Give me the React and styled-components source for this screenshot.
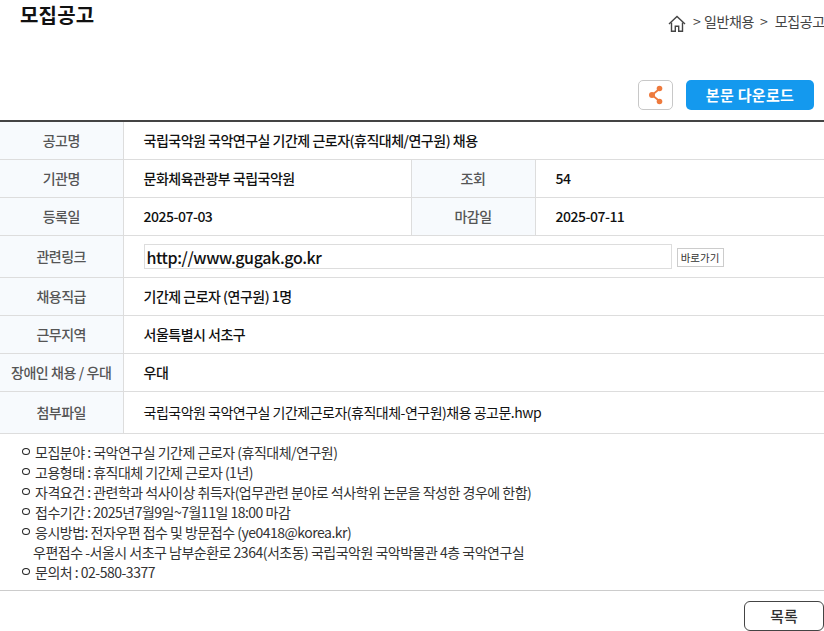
import React from 'react';
import styled, { createGlobalStyle } from 'styled-components';

const GlobalStyle = createGlobalStyle`
  html, body {
    margin: 0;
    padding: 0;
    background: #fff;
    overflow: hidden;
  }
  body {
    font-family: "Noto Sans CJK KR", "Noto Sans", sans-serif;
    color: #222;
  }
`;

const Page = styled.div`
  width: 824px;
  height: 631px;
  overflow: hidden;
`;

const Header = styled.div`
  display: flex;
  justify-content: space-between;
  height: 80px;
`;

const Title = styled.h1`
  margin: 0;
  padding: 1px 0 0 20px;
  font-size: 20px;
  line-height: 28px;
  font-weight: 700;
  color: #111;
  letter-spacing: 0.2px;
`;

const Breadcrumb = styled.div`
  display: flex;
  align-items: flex-start;
  flex-shrink: 0;
  width: 156px;
  padding-top: 12px;
  font-size: 14px;
  line-height: 18px;
  letter-spacing: -0.4px;
  word-spacing: 1px;
  color: #444;
  white-space: nowrap;
`;

const HomeIcon = styled.svg`
  width: 18px;
  height: 17px;
  margin: 3px 7px 0 0;
  flex-shrink: 0;
`;

const Crumb = styled.span`
  margin-right: 6px;
`;

const Actions = styled.div`
  display: flex;
  justify-content: flex-end;
  gap: 13px;
  height: 40px;
  padding-right: 10px;
`;

const ShareButton = styled.button`
  display: flex;
  align-items: center;
  justify-content: center;
  width: 35px;
  height: 30px;
  padding: 0;
  background: #fff;
  border: 1px solid #c8c8c8;
  border-radius: 5px;
`;

const DownloadButton = styled.button`
  width: 128px;
  height: 30px;
  padding: 0 0 2px;
  background: #1499ee;
  border: 0;
  border-radius: 5px;
  color: #fff;
  font-family: inherit;
  font-size: 15px;
  font-weight: 700;
  letter-spacing: 0.3px;
`;

const Table = styled.table`
  width: 824px;
  table-layout: fixed;
  border-collapse: collapse;
  border-top: 2px solid #444;
`;

const Row = styled.tr`
  height: ${props => props.$height}px;
  border-bottom: 1px solid #ddd;
`;

const Label = styled.th`
  padding: 0;
  background: #f7fafd;
  border-right: 1px solid #ddd;
  font-size: 14px;
  font-weight: 500;
  color: #555;
  text-align: center;
  white-space: nowrap;
  letter-spacing: ${props => (props.$tight ? '-0.4px' : '-0.5px')};
`;

const Value = styled.td`
  padding: 0 0 0 20px;
  border-right: ${props => (props.$divider ? '1px solid #ddd' : '0')};
  font-size: 14px;
  font-weight: ${props => (props.$plain ? 400 : 500)};
  color: #111;
  letter-spacing: -0.5px;
  white-space: nowrap;
`;

const LinkRow = styled.div`
  display: flex;
  align-items: center;
  gap: 5px;
`;

const LinkBox = styled.div`
  box-sizing: border-box;
  width: 528px;
  height: 25px;
  padding-left: 2px;
  border: 1px solid #ddd;
  font-size: 16px;
  line-height: 24px;
  font-weight: 500;
  letter-spacing: -0.4px;
  color: #111;
`;

const GoButton = styled.button`
  box-sizing: border-box;
  width: 47px;
  height: 19px;
  padding: 0;
  margin-top: 3px;
  background: #fff;
  border: 1px solid #ccc;
  font-family: inherit;
  font-size: 10.5px;
  line-height: 16px;
  color: #333;
`;

const InfoList = styled.ul`
  margin: 0;
  padding: 8px 0 8px 22px;
  list-style: none;
  border-bottom: 1px solid #ccc;
`;

const InfoItem = styled.li`
  display: flex;
  align-items: center;
  height: 20px;
  font-size: 14px;
  line-height: 20px;
  letter-spacing: -0.5px;
  color: #333;
  white-space: pre;
  padding-left: ${props => (props.$indent ? '11px' : '0')};

  ${props => !props.$indent && `
    &::before {
      content: '';
      box-sizing: border-box;
      width: 8px;
      height: 7px;
      margin-right: 5px;
      border: 1.6px solid #222;
      border-radius: 50%;
      flex-shrink: 0;
    }
  `}
`;

const Footer = styled.div`
  display: flex;
  justify-content: flex-end;
  padding-top: 10px;
`;

const ListButton = styled.button`
  width: 80px;
  height: 30px;
  padding: 0;
  background: #fff;
  border: 1px solid #444;
  border-radius: 6px;
  font-family: inherit;
  font-size: 15px;
  font-weight: 500;
  color: #333;
`;

const info = [
  '모집분야 : 국악연구실 기간제 근로자 (휴직대체/연구원)',
  '고용형태 : 휴직대체 기간제 근로자 (1년)',
  '자격요건 : 관련학과 석사이상 취득자(업무관련 분야로 석사학위 논문을 작성한 경우에 한함)',
  '접수기간 : 2025년7월9일~7월11일 18:00 마감',
  '응시방법: 전자우편 접수 및 방문접수 (ye0418@korea.kr)',
];

const App = () => (
  <Page>
    <GlobalStyle />
    <Header>
      <Title>모집공고</Title>
      <Breadcrumb>
        <HomeIcon viewBox="0 0 18 17" fill="none" stroke="#444" strokeWidth="1.4">
          <path d="M1 9 9 1.5 17 9" />
          <path d="M3.5 7.5v8.7h3.8v-5h3.4v5h3.8V7.5" />
        </HomeIcon>
        <Crumb>&gt; 일반채용</Crumb>
        <Crumb>&gt;&nbsp; 모집공고</Crumb>
      </Breadcrumb>
    </Header>
    <Actions>
      <ShareButton aria-label="공유">
        <svg width="16" height="22" viewBox="0 0 16 22">
          <path d="M12 4.5 4 11l8 6.5" fill="none" stroke="#ee7a3d" strokeWidth="1.8" />
          <circle cx="11.5" cy="4.5" r="2.8" fill="#ee7a3d" />
          <circle cx="4" cy="11" r="3" fill="#ee7a3d" />
          <circle cx="11.5" cy="17.5" r="2.8" fill="#ee7a3d" />
        </svg>
      </ShareButton>
      <DownloadButton>본문 다운로드</DownloadButton>
    </Actions>
    <Table>
      <colgroup>
        <col style={{ width: 123 }} />
        <col style={{ width: 288 }} />
        <col style={{ width: 124 }} />
        <col />
      </colgroup>
      <tbody>
        <Row $height={38}>
          <Label>공고명</Label>
          <Value colSpan={3}>국립국악원 국악연구실 기간제 근로자(휴직대체/연구원) 채용</Value>
        </Row>
        <Row $height={38}>
          <Label>기관명</Label>
          <Value $divider>문화체육관광부 국립국악원</Value>
          <Label>조회</Label>
          <Value>54</Value>
        </Row>
        <Row $height={38}>
          <Label>등록일</Label>
          <Value $divider>2025-07-03</Value>
          <Label>마감일</Label>
          <Value>2025-07-11</Value>
        </Row>
        <Row $height={42}>
          <Label>관련링크</Label>
          <Value colSpan={3}>
            <LinkRow>
              <LinkBox>http://www.gugak.go.kr</LinkBox>
              <GoButton>바로가기</GoButton>
            </LinkRow>
          </Value>
        </Row>
        <Row $height={38}>
          <Label>채용직급</Label>
          <Value colSpan={3}>기간제 근로자 (연구원) 1명</Value>
        </Row>
        <Row $height={38}>
          <Label>근무지역</Label>
          <Value colSpan={3}>서울특별시 서초구</Value>
        </Row>
        <Row $height={38}>
          <Label $tight>장애인 채용 / 우대</Label>
          <Value colSpan={3}>우대</Value>
        </Row>
        <Row $height={42}>
          <Label>첨부파일</Label>
          <Value colSpan={3} $plain>국립국악원 국악연구실 기간제근로자(휴직대체-연구원)채용 공고문.hwp</Value>
        </Row>
      </tbody>
    </Table>
    <InfoList>
      {info.map(text => (
        <InfoItem key={text}>{text}</InfoItem>
      ))}
      <InfoItem $indent>우편접수 -서울시 서초구 남부순환로 2364(서초동) 국립국악원 국악박물관 4층 국악연구실</InfoItem>
      <InfoItem>문의처 : 02-580-3377</InfoItem>
    </InfoList>
    <Footer>
      <ListButton>목록</ListButton>
    </Footer>
  </Page>
);

export default App;
